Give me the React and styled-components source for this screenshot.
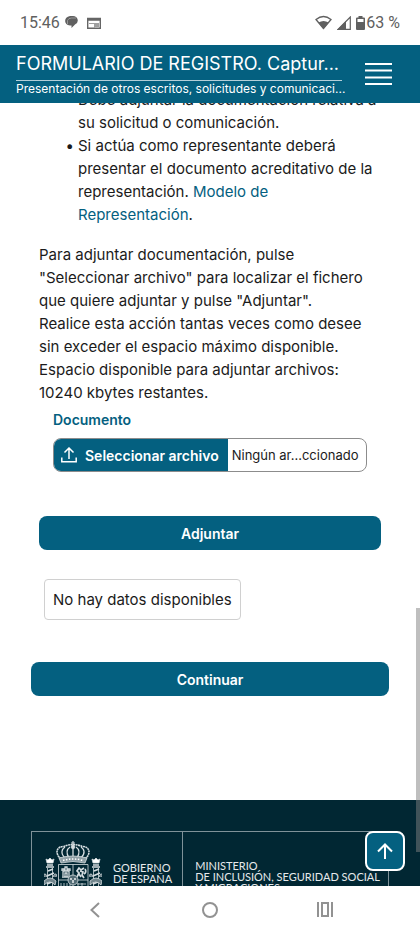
import React, { useState } from "react";
import styled, { createGlobalStyle, css } from "styled-components";

const GlobalStyle = createGlobalStyle`
  * {
    box-sizing: border-box;
  }
  body {
    margin: 0;
    background-color: #fff;
    color: #1b1b1b;
    font-family: Inter, "Liberation Sans", sans-serif;
    font-size: 15px;
    line-height: 23px;
  }
`;

function Crest() {
  return (
    <svg width="58" height="72" viewBox="0 0 58 72" fill="none" stroke="#d5dde0" strokeWidth="0.8" aria-hidden="true">
      <path d="M29 0v6M27 2h4" strokeWidth="1.2" />
      <circle cx="29" cy="6" r="1.8" fill="#d5dde0" />
      <path d="M17 18C10 12 13 5 20 5.500C24 3 34 3 38 5.500C45 5 48 12 41 18" strokeWidth="1.6" strokeDasharray="2 0.500" />
      <path d="M21 17C16 12 18 8 21 6M25 17C22 12 23 8 26 6M29 17V6M33 17C36 12 35 8 32 6M37 17C42 12 40 8 37 6" strokeWidth="1.300" />
      <path d="M15 17Q29 13 43 17L41 22Q29 19 17 22Z" fill="#8fa0a6" />
      <path d="M19 19.500Q29 16.500 39 19.500" stroke="#fff" strokeWidth="1.5" strokeDasharray="1.500 1.500" />
      {[6, 52].map((x) => (
        <g key={x} transform={`translate(${x} 0)`}>
          <path d="M-4 18L-3 22H3L4 18L2 19L0 17L-2 19Z" fill="#fff" />
          <path d="M-3 24H3M-4 26H4" strokeWidth="1.300" />
          <path d="M-2.500 27V48M2.500 27V48" />
          <path d="M-2 30L3 28M-3 35L4 32M-3 43L4 40" strokeWidth="1.800" />
          <path d="M-6 36C-8 32-3 32-3 36M6 36C8 32 4 32 3 36M-6 40Q0 34 6 40L5 44Q0 38-6 44Z" fill="#71858c" />
          <path d="M-4 49H4M-5 52H5M-6 55H6" strokeWidth="1.500" />
        </g>
      ))}
      <path d="M14.500 23.500H44V47Q44 58 29 62Q14.500 58 14.500 47ZM29 23.500V60M14.500 39H44" />
      <path d="M18 36H26M19 35V30H25V35M18 30V28H20V30M21 30V26H23V30M24 30V28H26V30M21 36V32H23V36" strokeWidth="1.300" />
      <path d="M33 36L35 32L33 30L35 27L37 29L40 27M36 30L39 31L38 34L40 37M35 33L37 36M41 28Q43 31 40 33" strokeWidth="1.700" />
      <path d="M17 42V53M20 42V55M23 42V57M26 42V58M33 43H42M33 47H42M33 51H40M34 42V54M38 42V54" />
      <circle cx="29" cy="39" r="5" fill="#536c75" />
      <path d="M27 37V39M31 37V39M29 39V42" stroke="#fff" strokeWidth="1.300" />
    </svg>
  );
}

function App() {
  const [fileName, setFileName] = useState("Ningún ar...ccionado");

  return (
    <Screen>
      <GlobalStyle />
      <StatusBar>
        <StatusGroup>
          <span>15:46</span>
          <svg width="13" height="13" viewBox="0 0 13 13" fill="#606060">
            <path d="M5 0h3a5 4.500 0 0 1 2 8.500L6.500 12V9.500H5C-1.500 9-1.500 1 5 0Z" />
            <path d="M2.500 8V4.500Q3.500 2 6.500 2H11" fill="none" stroke="#b0b0b0" strokeWidth="0.700" />
          </svg>
          <Calendar width="14" height="12" viewBox="0 0 14 12" fill="none" stroke="#666">
            <path d="M.7 1.500H13.300V11.300H.7Z" strokeWidth="1.400" />
            <path d="M1 2.500H13" strokeWidth="2.500" />
            <path d="M2 6.500H7M7.500 6V11" stroke="#a0a0a0" />
            <path d="M8 6H12V10H8Z" fill="#a0a0a0" stroke="none" />
          </Calendar>
        </StatusGroup>
        <StatusGroup>
          <svg width="17" height="15" viewBox="0 0 17 15">
            <path d="M8.500 13.500L1 4.500Q8.500-1.500 16 4.500Z" fill="none" stroke="#606060" strokeWidth="1.300" />
            <path d="M8.500 14L3.500 7.500Q8.500 4.500 13.500 7.500Z" fill="#606060" />
          </svg>
          <svg width="14" height="14" viewBox="0 0 14 14">
            <path d="M1 13.300L13.300 1V13.300Z" fill="none" stroke="#606060" strokeWidth="1.200" />
            <path d="M0 14L9 5V14Z" fill="#606060" />
          </svg>
          <Battery>
            <svg width="9" height="14" viewBox="0 0 9 14" fill="#606060">
              <path fillRule="evenodd" d="M2.500 0H6.500V1.500H8Q9 1.500 9 2.500V13Q9 14 8 14H1Q0 14 0 13V2.500Q0 1.500 1 1.500H2.500ZM1.500 3V6H7.500V3Z" />
            </svg>
            <span>63 %</span>
          </Battery>
        </StatusGroup>
      </StatusBar>

      <Header>
        <Titles>
          <Title>FORMULARIO DE REGISTRO. Captur...</Title>
          <Subtitle>Presentación de otros escritos, solicitudes y comunicaci...</Subtitle>
        </Titles>
        <MenuButton aria-label="Menú">
          <svg width="27" height="24" viewBox="0 0 27 24" stroke="#fff" strokeWidth="2">
            <path d="M0 2H27M0 8.500H27M0 15.500H27M0 22H27" />
          </svg>
        </MenuButton>
      </Header>

      <Page>
        <Main>
          <List>
            <li>Debe adjuntar la documentación relativa a su solicitud o comunicación.</li>
            <li>
              Si actúa como representante deberá presentar el documento acreditativo de la
              representación. <Link href="#modelo">Modelo de Representación</Link>.
            </li>
          </List>
          <Text>
            Para adjuntar documentación, pulse "Seleccionar archivo" para localizar el fichero que
            quiere adjuntar y pulse "Adjuntar".
            <br />
            Realice esta acción tantas veces como desee sin exceder el espacio máximo disponible.
            <br />
            Espacio disponible para adjuntar archivos: 10240 kbytes restantes.
          </Text>
          <Field>
            <Label htmlFor="documento">Documento</Label>
            <FilePicker>
              <PickerButton>
                <svg width="16" height="16" viewBox="0 0 16 16" fill="none" stroke="#fff" strokeWidth="1.500">
                  <path d="M8 12V1.500M3.500 5.500L8 1L12.500 5.500M.8 10.500V14.800H15.200V10.500" />
                </svg>
                Seleccionar archivo
              </PickerButton>
              <FileName>{fileName}</FileName>
              <FileInput
                type="file"
                id="documento"
                onChange={(e) => e.target.files[0] && setFileName(e.target.files[0].name)}
              />
            </FilePicker>
          </Field>
          <AttachButton type="button">Adjuntar</AttachButton>
          <Empty>No hay datos disponibles</Empty>
          <ContinueButton type="button">Continuar</ContinueButton>
        </Main>
        <Footer>
          <Brand>
            <Government>
              <Crest />
              <BrandText>
                GOBIERNO
                <br />
                DE ESPAÑA
              </BrandText>
            </Government>
            <Ministry>
              MINISTERIO
              <br />
              DE INCLUSIÓN, SEGURIDAD SOCIAL
              <br />Y MIGRACIONES
            </Ministry>
          </Brand>
        </Footer>
        <ScrollThumb />
        <TopButton aria-label="Subir">
          <svg width="16" height="16" viewBox="0 0 16 16" fill="none" stroke="#fff" strokeWidth="2">
            <path d="M8 16V1.500M1 8.500L8 1.500L15 8.500" />
          </svg>
        </TopButton>
      </Page>

      <NavBar>
        <NavButton aria-label="Atrás">
          <svg width="10" height="16" viewBox="0 0 10 16">
            <path d="M9 1L1.500 8L9 15" />
          </svg>
        </NavButton>
        <NavButton aria-label="Inicio">
          <svg width="16" height="16" viewBox="0 0 16 16">
            <circle cx="8" cy="8" r="7" />
          </svg>
        </NavButton>
        <NavButton aria-label="Recientes">
          <svg width="16" height="15" viewBox="0 0 16 15">
            <path d="M1 0V15M15 0V15M5 1H11V14H5Z" />
          </svg>
        </NavButton>
      </NavBar>
    </Screen>
  );
}

export default App;

const Screen = styled.div`
  height: 100vh;
  display: flex;
  flex-direction: column;
  overflow: hidden;
`;

const StatusBar = styled.div`
  flex: none;
  height: 45px;
  padding: 0 20px;
  display: flex;
  align-items: center;
  justify-content: space-between;
  color: #606060;
  font-family: Roboto, sans-serif;
  font-size: 16px;
`;

const StatusGroup = styled.div`
  display: flex;
  align-items: center;
  gap: 5px;
`;

const Calendar = styled.svg`
  margin-left: 4px;
`;

const Battery = styled.div`
  display: flex;
  align-items: center;
  gap: 1px;
`;

const Header = styled.header`
  flex: none;
  height: 58px;
  padding: 0 28px 0 16px;
  display: flex;
  align-items: center;
  gap: 23px;
  background-color: #046080;
  color: #fff;
  z-index: 1;
`;

const Titles = styled.div`
  flex: 1;
  min-width: 0;
`;

const headerText = css`
  margin: 0;
  white-space: nowrap;
  font-weight: 400;
`;

const Title = styled.h1`
  ${headerText};
  padding-bottom: 4px;
  border-bottom: 1px solid #b4cfd9;
  font-size: 18px;
  line-height: 24px;
`;

const Subtitle = styled.p`
  ${headerText};
  font-size: 12px;
  line-height: 16px;
`;

const MenuButton = styled.button`
  padding: 0;
  border: none;
  background-color: transparent;
  cursor: pointer;
  svg {
    display: block;
  }
`;

const Page = styled.div`
  flex: 1;
  min-height: 0;
  position: relative;
  display: flex;
  flex-direction: column;
`;

const Main = styled.main`
  flex: none;
  padding: 0 31px 104px;
  display: flex;
  flex-direction: column;
`;

/* the page is scrolled, so the first line runs under the header */
const List = styled.ul`
  margin: -15px 8px 17px;
  padding-left: 39px;
  list-style-type: "• ";
`;

const Link = styled.a`
  color: #046080;
  text-decoration: none;
`;

const Text = styled.p`
  margin: 0 8px 4px;
`;

const Field = styled.div`
  margin: 0 22px;
  display: flex;
  flex-direction: column;
  gap: 7px;
`;

const Label = styled.label`
  color: #046080;
  font-size: 14px;
  font-weight: 600;
`;

const FilePicker = styled.div`
  position: relative;
  height: 34px;
  display: flex;
  border: 1px solid #8c8c8c;
  border-radius: 8px;
  overflow: hidden;
`;

const PickerButton = styled.span`
  padding: 0 9px 0 7px;
  display: flex;
  align-items: center;
  gap: 8px;
  background-color: #046080;
  color: #fff;
  font-size: 14px;
  font-weight: 600;
  white-space: nowrap;
`;

const FileName = styled.span`
  flex: 1;
  min-width: 0;
  padding-left: 4px;
  align-self: center;
  overflow: hidden;
  font-size: 13px;
  white-space: nowrap;
`;

const FileInput = styled.input`
  position: absolute;
  inset: 0;
  width: 100%;
  opacity: 0;
  cursor: pointer;
`;

const Button = styled.button`
  height: 34px;
  border: none;
  border-radius: 8px;
  background-color: #046080;
  color: #fff;
  font-family: inherit;
  font-size: 14px;
  font-weight: 600;
  cursor: pointer;
`;

const AttachButton = styled(Button)`
  margin: 44px 8px 29px;
`;

const ContinueButton = styled(Button)`
  margin-top: 42px;
`;

const Empty = styled.div`
  align-self: flex-start;
  margin-left: 13px;
  padding: 8px;
  border: 1px solid #d0d0d0;
  border-radius: 4px;
`;

const Footer = styled.footer`
  flex: 1;
  min-height: 0;
  padding: 31px 31px 0;
  overflow: hidden;
  background-color: #012733;
  color: #e6eaec;
`;

const Brand = styled.div`
  display: flex;
  border: 1px solid #7f9299;
  font-family: Lato, sans-serif;
  font-size: 11px;
  line-height: 11px;
`;

const Government = styled.div`
  flex: none;
  padding: 9px 10px 0 12px;
  display: flex;
  gap: 11px;
  border-right: 1px solid #7f9299;
`;

const BrandText = styled.span`
  padding-top: 21px;
`;

const Ministry = styled.div`
  padding: 28px 0 20px 12px;
  white-space: nowrap;
`;

const ScrollThumb = styled.div`
  position: absolute;
  right: 0;
  bottom: 34px;
  width: 4px;
  height: 244px;
  background-color: rgba(128, 128, 128, 0.5);
`;

const TopButton = styled.button`
  position: absolute;
  right: 15px;
  bottom: 15px;
  width: 40px;
  height: 40px;
  padding: 0;
  display: grid;
  place-items: center;
  border: 2px solid #fff;
  border-radius: 8px;
  background-color: #046080;
  cursor: pointer;
`;

const NavBar = styled.nav`
  flex: none;
  height: 47px;
  padding: 0 38px;
  display: flex;
  background-color: #fff;
  z-index: 1;
`;

const NavButton = styled.button`
  flex: 1;
  padding: 0;
  display: grid;
  place-items: center;
  border: none;
  background-color: transparent;
  cursor: pointer;
  svg {
    fill: none;
    stroke: #929292;
    stroke-width: 2;
  }
`;
